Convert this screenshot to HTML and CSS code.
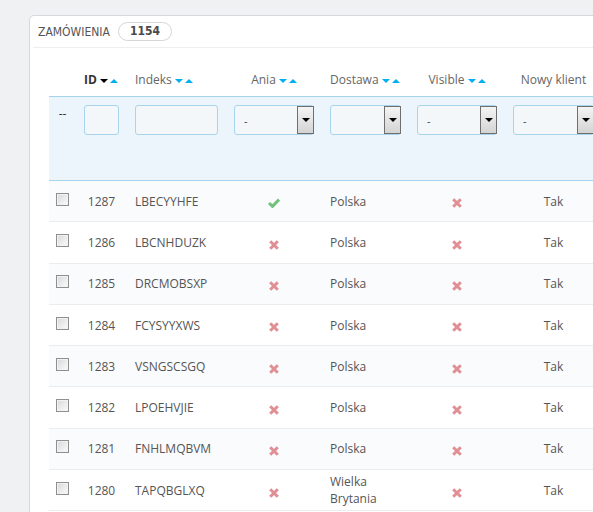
FILE: index.html
```html
<!DOCTYPE html>
<html lang="pl">
<head>
<meta charset="utf-8">
<title>Zamówienia</title>
<link rel="stylesheet" href="styles.css">
</head>
<body>
<div class="page">
  <div class="panel">
    <div class="panel-heading">Zamówienia <span class="badge">1154</span></div>
    <table class="table">
      <colgroup>
        <col class="w1"><col class="w2"><col class="w3"><col class="w4"><col class="w5"><col class="w6"><col class="w7">
      </colgroup>
      <thead>
        <tr class="titles">
          <th></th>
          <th><span class="title active">ID</span><span class="sort"><i class="down on"></i><i class="up"></i></span></th>
          <th><span class="title">Indeks</span><span class="sort"><i class="down"></i><i class="up"></i></span></th>
          <th class="center"><span class="title">Ania</span><span class="sort"><i class="down"></i><i class="up"></i></span></th>
          <th><span class="title">Dostawa</span><span class="sort"><i class="down"></i><i class="up"></i></span></th>
          <th class="center"><span class="title">Visible</span><span class="sort"><i class="down"></i><i class="up"></i></span></th>
          <th class="center"><span class="title">Nowy klient</span></th>
        </tr>
        <tr class="filter">
          <th class="center dash">--</th>
          <th><div class="input"></div></th>
          <th><div class="input"></div></th>
          <th><div class="select"><span class="val">-</span><span class="btn"></span></div></th>
          <th><div class="select"><span class="val"></span><span class="btn"></span></div></th>
          <th><div class="select"><span class="val">-</span><span class="btn"></span></div></th>
          <th><div class="select"><span class="val">-</span><span class="btn"></span></div></th>
        </tr>
      </thead>
      <tbody>
        <tr>
          <td><span class="cb"></span></td><td class="center">1287</td><td>LBECYYHFE</td>
          <td class="center"><svg class="ic ok" width="12" height="10" viewBox="0 0 12 10"><path d="M1 5 L4.5 8.4 L11 1.6" fill="none" stroke="#72c279" stroke-width="3"/></svg></td>
          <td>Polska</td>
          <td class="center"><svg class="ic no" width="10" height="10" viewBox="0 0 10 10"><path d="M1.2 1.2 L8.8 8.8 M8.8 1.2 L1.2 8.8" stroke="#e08f95" stroke-width="3"/></svg></td>
          <td class="center">Tak</td>
        </tr>
        <tr>
          <td><span class="cb"></span></td><td class="center">1286</td><td>LBCNHDUZK</td>
          <td class="center"><svg class="ic no" width="10" height="10" viewBox="0 0 10 10"><path d="M1.2 1.2 L8.8 8.8 M8.8 1.2 L1.2 8.8" stroke="#e08f95" stroke-width="3"/></svg></td>
          <td>Polska</td>
          <td class="center"><svg class="ic no" width="10" height="10" viewBox="0 0 10 10"><path d="M1.2 1.2 L8.8 8.8 M8.8 1.2 L1.2 8.8" stroke="#e08f95" stroke-width="3"/></svg></td>
          <td class="center">Tak</td>
        </tr>
        <tr>
          <td><span class="cb"></span></td><td class="center">1285</td><td>DRCMOBSXP</td>
          <td class="center"><svg class="ic no" width="10" height="10" viewBox="0 0 10 10"><path d="M1.2 1.2 L8.8 8.8 M8.8 1.2 L1.2 8.8" stroke="#e08f95" stroke-width="3"/></svg></td>
          <td>Polska</td>
          <td class="center"><svg class="ic no" width="10" height="10" viewBox="0 0 10 10"><path d="M1.2 1.2 L8.8 8.8 M8.8 1.2 L1.2 8.8" stroke="#e08f95" stroke-width="3"/></svg></td>
          <td class="center">Tak</td>
        </tr>
        <tr>
          <td><span class="cb"></span></td><td class="center">1284</td><td>FCYSYYXWS</td>
          <td class="center"><svg class="ic no" width="10" height="10" viewBox="0 0 10 10"><path d="M1.2 1.2 L8.8 8.8 M8.8 1.2 L1.2 8.8" stroke="#e08f95" stroke-width="3"/></svg></td>
          <td>Polska</td>
          <td class="center"><svg class="ic no" width="10" height="10" viewBox="0 0 10 10"><path d="M1.2 1.2 L8.8 8.8 M8.8 1.2 L1.2 8.8" stroke="#e08f95" stroke-width="3"/></svg></td>
          <td class="center">Tak</td>
        </tr>
        <tr>
          <td><span class="cb"></span></td><td class="center">1283</td><td>VSNGSCSGQ</td>
          <td class="center"><svg class="ic no" width="10" height="10" viewBox="0 0 10 10"><path d="M1.2 1.2 L8.8 8.8 M8.8 1.2 L1.2 8.8" stroke="#e08f95" stroke-width="3"/></svg></td>
          <td>Polska</td>
          <td class="center"><svg class="ic no" width="10" height="10" viewBox="0 0 10 10"><path d="M1.2 1.2 L8.8 8.8 M8.8 1.2 L1.2 8.8" stroke="#e08f95" stroke-width="3"/></svg></td>
          <td class="center">Tak</td>
        </tr>
        <tr>
          <td><span class="cb"></span></td><td class="center">1282</td><td>LPOEHVJIE</td>
          <td class="center"><svg class="ic no" width="10" height="10" viewBox="0 0 10 10"><path d="M1.2 1.2 L8.8 8.8 M8.8 1.2 L1.2 8.8" stroke="#e08f95" stroke-width="3"/></svg></td>
          <td>Polska</td>
          <td class="center"><svg class="ic no" width="10" height="10" viewBox="0 0 10 10"><path d="M1.2 1.2 L8.8 8.8 M8.8 1.2 L1.2 8.8" stroke="#e08f95" stroke-width="3"/></svg></td>
          <td class="center">Tak</td>
        </tr>
        <tr>
          <td><span class="cb"></span></td><td class="center">1281</td><td>FNHLMQBVM</td>
          <td class="center"><svg class="ic no" width="10" height="10" viewBox="0 0 10 10"><path d="M1.2 1.2 L8.8 8.8 M8.8 1.2 L1.2 8.8" stroke="#e08f95" stroke-width="3"/></svg></td>
          <td>Polska</td>
          <td class="center"><svg class="ic no" width="10" height="10" viewBox="0 0 10 10"><path d="M1.2 1.2 L8.8 8.8 M8.8 1.2 L1.2 8.8" stroke="#e08f95" stroke-width="3"/></svg></td>
          <td class="center">Tak</td>
        </tr>
        <tr>
          <td><span class="cb"></span></td><td class="center">1280</td><td>TAPQBGLXQ</td>
          <td class="center"><svg class="ic no" width="10" height="10" viewBox="0 0 10 10"><path d="M1.2 1.2 L8.8 8.8 M8.8 1.2 L1.2 8.8" stroke="#e08f95" stroke-width="3"/></svg></td>
          <td>Wielka Brytania</td>
          <td class="center"><svg class="ic no" width="10" height="10" viewBox="0 0 10 10"><path d="M1.2 1.2 L8.8 8.8 M8.8 1.2 L1.2 8.8" stroke="#e08f95" stroke-width="3"/></svg></td>
          <td class="center">Tak</td>
        </tr>
      </tbody>
    </table>
  </div>
</div>
</body>
</html>
```
FILE: styles.css
```css
html, body {
  overflow: hidden;
}
body {
  margin: 0;
  background: #eff1f2;
  font-family: "Open Sans", "DejaVu Sans", sans-serif;
  font-size: 12px;
  color: #555;
}
.page {
  padding: 15px 0 0 29px;
}
.panel {
  width: 640px;
  background: #fff;
  border: 1px solid #d5d9dc;
  border-radius: 5px;
  padding: 20px 20px 40px 19px;
}
.panel-heading {
  display: flex;
  align-items: center;
  box-sizing: border-box;
  height: 32px;
  margin: -20px -16px 15px -16px;
  padding-left: 5px;
  border-bottom: 1px solid #eee;
  font-family: "DejaVu Sans Condensed", "DejaVu Sans", sans-serif;
  font-stretch: condensed;
  font-size: 12px;
  text-transform: uppercase;
  color: #555;
}
.badge {
  margin-left: 8px;
  height: 19px;
  box-sizing: border-box;
  line-height: 17px;
  padding: 0 11px;
  border: 1px solid #d6d6d6;
  border-radius: 10px;
  font-weight: bold;
  color: #4a4a4a;
}
.table {
  border-collapse: collapse;
  table-layout: fixed;
  width: 553px;
}
.w1 { width: 27px; }
.w2 { width: 51px; }
.w3 { width: 99px; }
.w4 { width: 96px; }
.w5 { width: 87px; }
.w6 { width: 96px; }
.w7 { width: 97px; }
.center { text-align: center; }
.titles th {
  height: 33px;
  padding: 0 8px;
  font-weight: normal;
  color: #666;
  text-align: left;
  vertical-align: middle;
  white-space: nowrap;
}
.titles th.center { text-align: center; }
.title.active {
  font-weight: bold;
  color: #333;
}
.sort {
  display: inline-block;
  margin-left: 3px;
  vertical-align: middle;
  line-height: 0;
}
.sort i {
  display: inline-block;
  width: 0;
  height: 0;
  border-left: 4px solid transparent;
  border-right: 4px solid transparent;
}
.sort .down { border-top: 4px solid #00aff0; }
.sort .down.on { border-top-color: #000; }
.sort .up { border-bottom: 4px solid #00aff0; margin-left: 2px; }
.filter th {
  box-sizing: border-box;
  height: 84px;
  padding: 8px 8px 0;
  background: #ecf5fb;
  border-top: 1px solid #a6d4ec;
  border-bottom: 1px solid #a6d4ec;
  vertical-align: top;
  font-weight: normal;
  text-align: left;
}
.filter th.dash {
  text-align: center;
  padding-left: 7px;
  padding-right: 7px;
  line-height: 18px;
  color: #333;
}
.input {
  height: 30px;
  box-sizing: border-box;
  border: 1px solid #a9d4ec;
  border-radius: 3px;
  background: #f3f7f9;
}
.select {
  display: flex;
  height: 30px;
  box-sizing: border-box;
  border: 1px solid #a9d4ec;
  border-radius: 3px;
  background: #f3f7f9;
}
.select .val {
  flex: 1;
  padding-left: 9px;
  line-height: 30px;
  font-size: 11px;
  color: #444;
}
.select .btn {
  display: flex;
  align-items: center;
  justify-content: center;
  width: 15px;
  margin-right: -1px;
  border: 1px solid #6f6f6f;
  background: linear-gradient(#f4f4f4, #d4d4d4);
}
.select .btn::after {
  content: "";
  border-left: 4px solid transparent;
  border-right: 4px solid transparent;
  border-top: 4px solid #000;
  margin-left: 1px;
}
tbody td {
  box-sizing: border-box;
  height: 41.3px;
  padding: 3px 8px;
  border-bottom: 1px solid #eaedef;
  vertical-align: middle;
  line-height: 17px;
  color: #555;
}
tbody td:first-child {
  padding-left: 7px;
  padding-right: 7px;
}
tbody tr:nth-child(odd) td {
  background: #fafbfd;
}
.cb {
  display: block;
  width: 13px;
  height: 13px;
  box-sizing: border-box;
  margin: -4px auto 0;
  border: 1px solid #8e8f8f;
  background: linear-gradient(135deg, #d8d8d8, #fcfcfc);
  box-shadow: inset 0 0 0 1px #f2f2f2;
}
.ic {
  display: inline-block;
  vertical-align: middle;
  position: relative;
  top: 1px;
}
```
